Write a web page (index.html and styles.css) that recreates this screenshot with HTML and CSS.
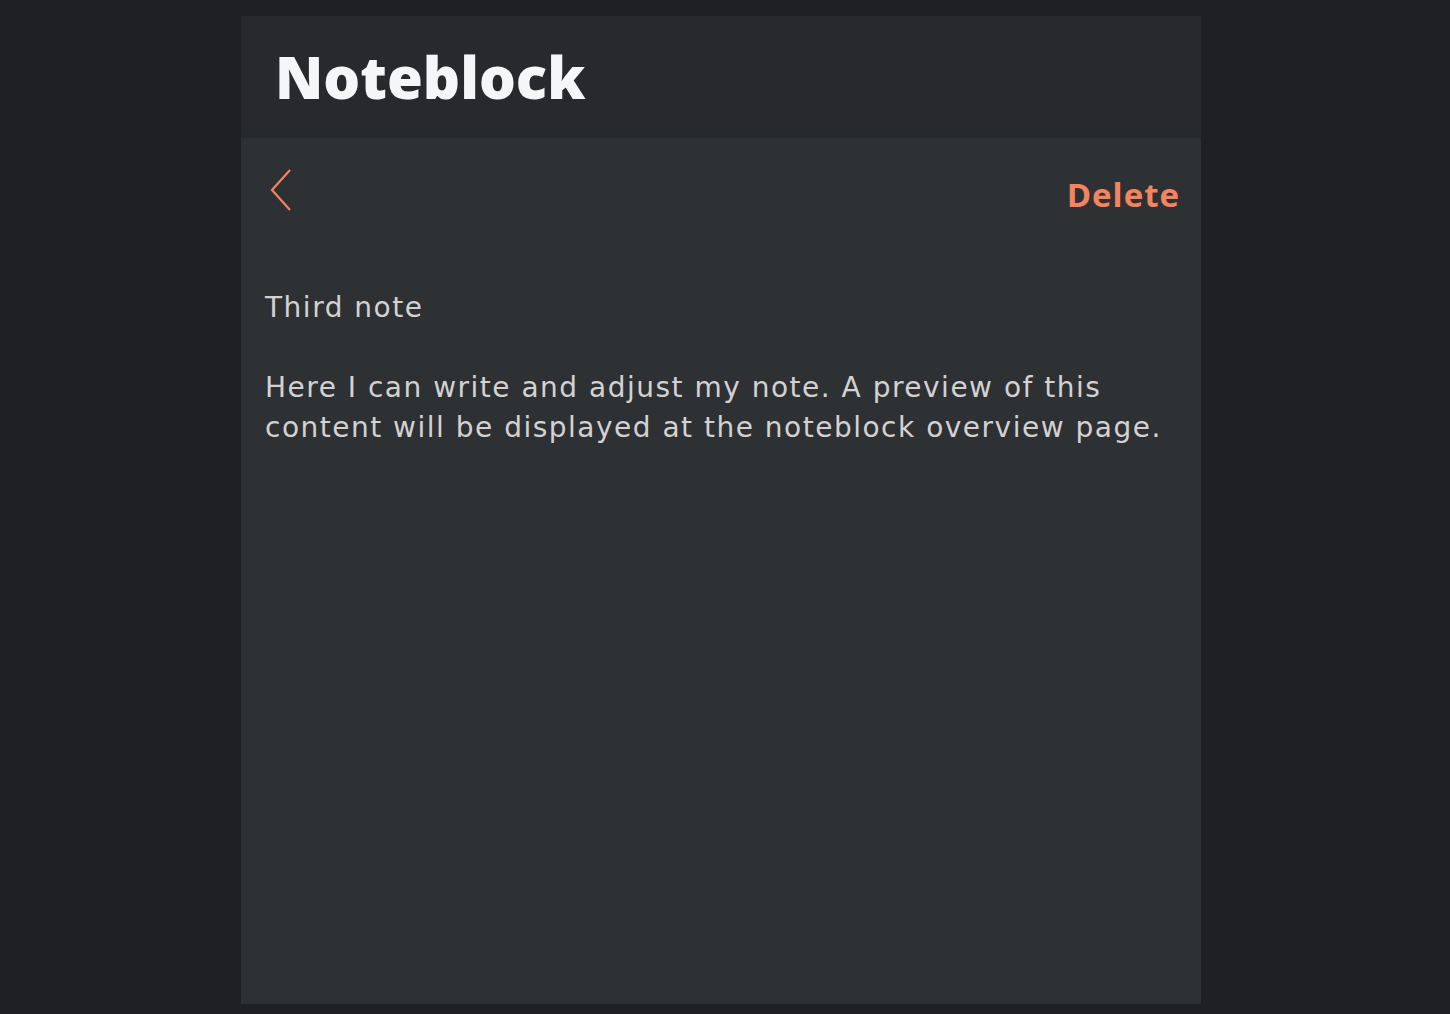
FILE: index.html
```html
<!DOCTYPE html>
<html lang="en">
<head>
<meta charset="utf-8">
<title>Noteblock</title>
<link rel="stylesheet" href="styles.css">
</head>
<body>
<div class="app">
  <header class="app-header">
    <h1 class="brand">Noteblock</h1>
  </header>
  <main class="note-view">
    <div class="toolbar">
      <button class="back" aria-label="Back">
        <svg width="24" height="42" viewBox="0 0 24 42"><path d="M21 1 L3 21 L21 41" fill="none" stroke="#f4845f" stroke-width="2.2"/></svg>
      </button>
      <button class="delete">Delete</button>
    </div>
    <div class="note">
      <p class="note-title">Third note</p>
      <p class="note-body">Here I can write and adjust my note. A preview of this content will be displayed at the noteblock overview page.</p>
    </div>
  </main>
</div>
</body>
</html>
```
FILE: styles.css
```css
* { box-sizing: border-box; }
html, body { margin: 0; padding: 0; }
body {
  background: #1f2023;
  font-family: "Open Sans", "DejaVu Sans", sans-serif;
  min-height: 1014px;
  padding-right: 8px;
}
.app {
  width: 960px;
  height: 988px;
  margin: 16px auto 0;
  display: flex;
  flex-direction: column;
  background: #2e3134;
}
.app-header {
  height: 122px;
  background: #28292c;
  display: flex;
  align-items: center;
  padding-left: 34px;
}
.brand {
  margin: 0;
  color: #f5f6f8;
  font-size: 58px;
  font-weight: 800;
  letter-spacing: 0;
  line-height: 1;
}
.note-view {
  flex: 1;
  padding: 0 21px 0 24px;
}
.toolbar {
  display: flex;
  justify-content: space-between;
  align-items: flex-start;
  padding-top: 31px;
  height: 150px;
}
.back {
  background: none;
  border: 0;
  padding: 0;
  margin-left: 4px;
  width: 24px;
  height: 42px;
  cursor: pointer;
}
.back svg { display: block; }
.delete {
  background: none;
  border: 0;
  padding: 0;
  margin-top: 4px;
  color: #f4845f;
  font-family: inherit;
  font-size: 33px;
  font-weight: 700;
  letter-spacing: 1px;
  line-height: 44px;
  cursor: pointer;
}
.note {
  color: #d3d1d1;
  font-family: "DejaVu Sans", "Open Sans", sans-serif;
  font-size: 28px;
  letter-spacing: 1.5px;
  line-height: 40px;
}
.note p { margin: 0; }
.note-title { margin-bottom: 40px !important; }
```
